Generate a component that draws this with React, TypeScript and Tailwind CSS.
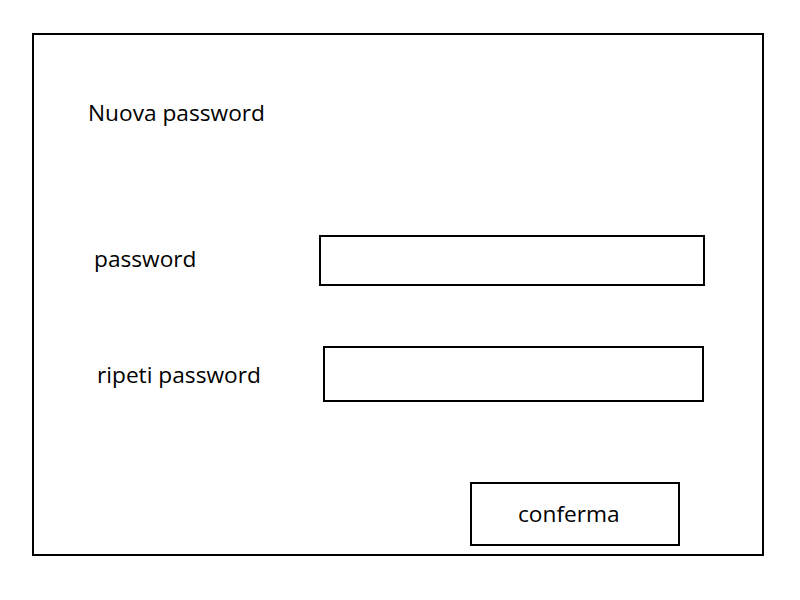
export default function App() {
  return (
    <div className="w-[800px] h-[600px] bg-white pt-[33px] pl-[32px] font-['Open_Sans',sans-serif] text-[22.7px] text-black">
      <div className="w-[732px] h-[523px] border-2 border-black">
        <div className="mt-[63px] ml-[54px] leading-[30px]">Nuova password</div>

        <div className="mt-[107px] ml-[60px] flex items-center">
          <label className="w-[225px] shrink-0 leading-[30px] -translate-y-[2px]">password</label>
          <input type="password" className="w-[386px] h-[51px] border-2 border-black bg-white outline-none" />
        </div>

        <div className="mt-[60px] ml-[63px] flex items-center">
          <label className="w-[226px] shrink-0 leading-[30px] translate-y-[1px]">ripeti password</label>
          <input type="password" className="w-[381px] h-[56px] border-2 border-black bg-white outline-none" />
        </div>

        <button className="mt-[80px] ml-[436px] w-[210px] h-[64px] border-2 border-black bg-white text-left pl-[46px] leading-[30px] block">
          <span className="block">conferma</span>
        </button>
      </div>
    </div>
  );
}
